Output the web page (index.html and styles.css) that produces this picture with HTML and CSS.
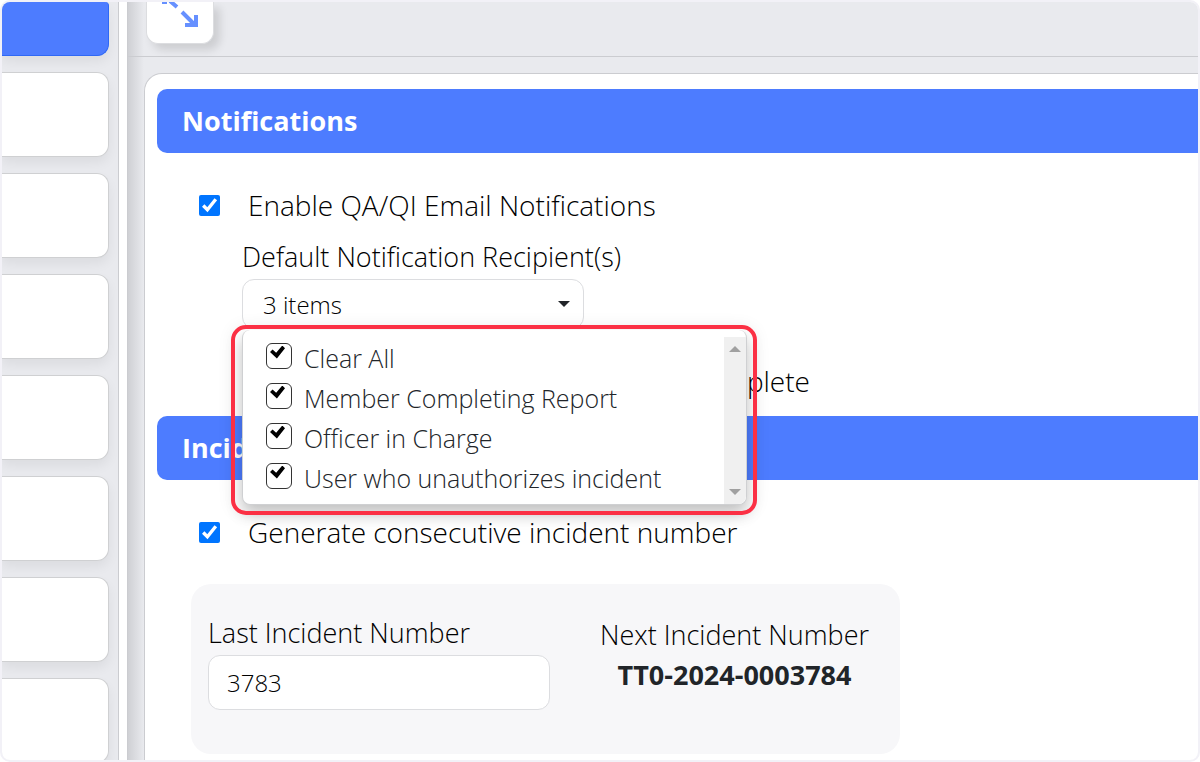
FILE: index.html
```html
<!DOCTYPE html>
<html lang="en">
<head>
    <meta charset="UTF-8">
    <meta name="viewport" content="width=device-width, initial-scale=1.0">
    <title>Incident Settings</title>
    <link rel="stylesheet" href="styles.css">
</head>
<body>
    <div class="frame">
        <nav class="sidebar">
            <div class="side-card active"></div>
            <div class="side-card"></div>
            <div class="side-card"></div>
            <div class="side-card"></div>
            <div class="side-card"></div>
            <div class="side-card"></div>
            <div class="side-card"></div>
            <div class="side-card"></div>
        </nav>
        <main class="main">
            <div class="toolbar">
                <button class="expand-btn" type="button" aria-label="Expand">
                    <svg width="66" height="42" viewBox="0 0 66 42" fill="none" stroke="#6690ff" stroke-width="4">
                        <path d="M15 0h5M23 -1l7 6M35 10l12 12"/>
                        <path d="M38 23h11v-10"/>
                    </svg>
                </button>
            </div>
            <div class="panel">
                <h2 class="section-title">Notifications</h2>
                <div class="section">
                    <div class="check-row">
                        <input type="checkbox" id="enable-email" checked>
                        <label for="enable-email">Enable QA/QI Email Notifications</label>
                    </div>
                    <div class="recipients">
                        <label class="field-label" for="recipients">Default Notification Recipient(s)</label>
                        <div class="select-wrap">
                            <select class="field" id="recipients">
                                <option>3 items</option>
                            </select>
                            <!-- open recipient list -->
                            <div class="menu">
                                <div class="menu-items">
                                    <label class="menu-item"><input type="checkbox" checked>Clear All</label>
                                    <label class="menu-item"><input type="checkbox" checked>Member Completing Report</label>
                                    <label class="menu-item"><input type="checkbox" checked>Officer in Charge</label>
                                    <label class="menu-item"><input type="checkbox" checked>User who unauthorizes incident</label>
                                </div>
                                <div class="menu-scroll">
                                    <span class="arrow-up"></span>
                                    <span class="arrow-down"></span>
                                </div>
                            </div>
                            <div class="highlight"></div>
                        </div>
                    </div>
                    <div class="check-row nested">
                        <input type="checkbox" id="notify-complete" checked>
                        <label for="notify-complete">complete</label>
                    </div>
                </div>
                <h2 class="section-title">Incident</h2>
                <div class="section">
                    <div class="check-row">
                        <input type="checkbox" id="consecutive" checked>
                        <label for="consecutive">Generate consecutive incident number</label>
                    </div>
                    <div class="number-box">
                        <div class="last-number">
                            <label class="field-label" for="last-number">Last Incident Number</label>
                            <input class="field" type="text" id="last-number" value="3783">
                        </div>
                        <div class="next-number">
                            <div>Next Incident Number</div>
                            <b>TT0-2024-0003784</b>
                        </div>
                    </div>
                </div>
            </div>
        </main>
    </div>
</body>
</html>
```
FILE: styles.css
```css
* {
    box-sizing: border-box;
}

body {
    margin: 0;
    background-color: #ffffff;
    font-family: "Open Sans", "Noto Sans", sans-serif;
    font-weight: 300;
    font-size: 27px;
    color: #000000;
}

.frame {
    display: flex;
    height: 100vh;
    border: 2px solid #f2f1f7;
    border-radius: 10px;
    overflow: hidden;
}

.sidebar {
    display: flex;
    flex-direction: column;
    flex-shrink: 0;
    gap: 16px;
    width: 117px;
    padding-right: 9px;
    border-right: 1px solid #cbccd0;
    background-color: #e9eaee;
    overflow: hidden;
}

.side-card {
    flex-shrink: 0;
    height: 85px;
    background-color: #ffffff;
    border: 1px solid #cfd0d2;
    border-left: none;
    border-radius: 0 12px 12px 0;
    box-shadow: 0 6px 12px rgba(0, 0, 0, 0.06);
}

.side-card.active {
    height: 54px;
    background-color: #4d7cff;
    border-color: #2f68f5;
    border-top: none;
    border-top-right-radius: 4px;
}

.main {
    flex: 1;
    min-width: 0;
    margin-left: 8px;
    border-left: 1px solid #cbccd0;
    background: linear-gradient(to right, #cfd0d4, #e9eaee 16px);
}

.toolbar {
    height: 55px;
    padding-left: 18px;
    border-bottom: 1px solid #cbccd0;
}

.expand-btn {
    display: block;
    width: 68px;
    height: 42px;
    padding: 0;
    border: 1px solid #dcdde0;
    border-top: none;
    border-radius: 0 0 12px 12px;
    background-color: #ffffff;
    box-shadow: 6px 6px 8px rgba(0, 0, 0, 0.12);
    cursor: pointer;
}

.expand-btn svg {
    display: block;
}

.panel {
    height: 100%;
    margin: 16px 0 0 16px;
    padding: 15px 0 0 12px;
    background-color: #ffffff;
    border: 1px solid #cbccd0;
    border-right: none;
    border-radius: 18px 0 0 0;
}

.section-title {
    margin: 0;
    padding-left: 25px;
    background-color: #4d7cff;
    border-radius: 10px 0 0 10px;
    font-size: 27px;
    font-weight: 700;
    line-height: 64px;
    color: #ffffff;
}

.section {
    padding: 33px 0 0 34px;
}

.check-row {
    display: flex;
    align-items: center;
    gap: 28px;
    height: 38px;
    padding-left: 8px;
    font-size: 28px;
}

.check-row input {
    width: 21px;
    height: 21px;
    margin: 0;
    accent-color: #0075ff;
}

.recipients {
    padding: 14px 0 0 51px;
}

.field-label {
    display: block;
    margin-bottom: 3px;
    line-height: 38px;
}

.field {
    display: block;
    width: 342px;
    height: 55px;
    padding: 0 18px;
    border: 1px solid #dcdde0;
    border-radius: 12px;
    background-color: #ffffff;
    font-family: inherit;
    font-size: 24px;
    font-weight: inherit;
    color: #000000;
}

select.field {
    height: 50px;
    padding: 0 20px;
    appearance: none;
}

.select-wrap {
    position: relative;
    width: 342px;
}

.select-wrap::after {
    content: "";
    position: absolute;
    top: 22px;
    right: 14px;
    border: 6px solid transparent;
    border-top-color: #212529;
    border-bottom: none;
}

.menu {
    position: absolute;
    z-index: 1;
    top: 51px;
    left: 0;
    display: flex;
    justify-content: space-between;
    width: 505px;
    padding-top: 7px;
    border: 1px solid #cfd0d2;
    border-top: none;
    border-radius: 8px;
    background-color: #ffffff;
    box-shadow: 0 8px 16px rgba(0, 0, 0, 0.25);
}

.menu-items {
    padding: 1px 0 6px 23px;
}

.menu-item {
    display: flex;
    align-items: center;
    gap: 12px;
    height: 40px;
    font-size: 25px;
    color: #212529;
}

.menu-item input {
    position: relative;
    width: 26px;
    height: 26px;
    margin: 0 0 5px;
    border: 1px solid #333333;
    border-radius: 6px;
    background-color: #ffffff;
    appearance: none;
}

/* tick sits in the upper part of the box */
.menu-item input:checked::after {
    content: "";
    position: absolute;
    top: 2px;
    left: 3px;
    width: 15px;
    height: 13px;
    background-color: #000000;
    clip-path: polygon(0 50%, 17% 31%, 41% 56%, 82% 0, 100% 22%, 46% 100%);
}

.menu-scroll {
    display: flex;
    flex-direction: column;
    justify-content: space-between;
    align-items: center;
    width: 22px;
    padding: 9px 0;
    border-bottom-right-radius: 8px;
    background-color: #f0f0f0;
}

.arrow-up,
.arrow-down {
    border: 6px solid transparent;
}

.arrow-up {
    border-top: none;
    border-bottom-color: #a0a0a0;
}

.arrow-down {
    border-bottom: none;
    border-top-color: #a0a0a0;
}

.highlight {
    position: absolute;
    z-index: 2;
    top: 46px;
    left: -11px;
    width: 526px;
    height: 190px;
    border: 4px solid #fb3044;
    border-radius: 15px;
    box-shadow: 0 0 16px rgba(0, 0, 0, 0.06);
    pointer-events: none;
}

.nested {
    justify-content: space-between;
    width: 619px;
    height: 87px;
    padding: 17px 0 0 51px;
}

.number-box {
    display: flex;
    align-items: flex-start;
    gap: 50px;
    width: 709px;
    max-width: 100%;
    height: 170px;
    margin-top: 33px;
    padding: 30px 17px;
    border-radius: 20px;
    background-color: #f7f7f9;
}

.next-number {
    padding-top: 1px;
    line-height: 40px;
    text-align: center;
}

.next-number b {
    font-weight: 700;
    color: #212529;
}
```
